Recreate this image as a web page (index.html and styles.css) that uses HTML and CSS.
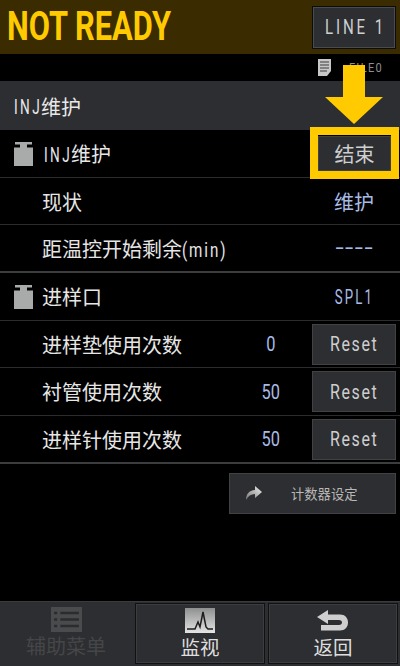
FILE: index.html
```html
<!DOCTYPE html>
<html lang="zh">
<head>
<meta charset="utf-8">
<title>INJ维护</title>
<link rel="stylesheet" href="styles.css">
</head>
<body>
<div class="screen">
  <header class="status">
    <span class="status-text">NOT READY</span>
    <button class="line-btn"><span class="line-text">LINE 1</span></button>
  </header>
  <div class="filebar">
    <svg class="file-icon" width="13" height="17" viewBox="0 0 13 17"><path d="M0 0h13v12l-4 5H0z" fill="#c8c8c8"/><path d="M2 3h9M2 6h9M2 9h9M2 12h7" stroke="#3a3a3a" stroke-width="1.200"/></svg>
    <span class="file-name">FILE0</span>
  </div>
  <div class="title"><span class="inj">INJ</span>维护</div>
  <main class="list">
    <div class="row">
      <svg class="weight" width="19" height="24" viewBox="0 0 19 24"><path d="M1 0h17v2.500h-5v3h6V24H0V5.500h6v-3H1z" fill="#a9abab"/></svg>
      <span class="label tight"><span class="inj row-inj">INJ</span>维护</span>
      <button class="action end-btn">结束</button>
    </div>
    <div class="row">
      <span class="label indent">现状</span>
      <span class="value right-val">维护</span>
    </div>
    <div class="row thick">
      <span class="label indent">距温控开始剩余<span class="min">(min)</span></span>
      <span class="value right-val"><span class="dashes">----</span></span>
    </div>
    <div class="row">
      <svg class="weight" width="19" height="24" viewBox="0 0 19 24"><path d="M1 0h17v2.500h-5v3h6V24H0V5.500h6v-3H1z" fill="#a9abab"/></svg>
      <span class="label tight">进样口</span>
      <span class="value right-val"><span class="spl">SPL1</span></span>
    </div>
    <div class="row">
      <span class="label indent">进样垫使用次数</span>
      <span class="value count"><span class="num">0</span></span>
      <button class="action"><span class="reset">Reset</span></button>
    </div>
    <div class="row">
      <span class="label indent">衬管使用次数</span>
      <span class="value count"><span class="num">50</span></span>
      <button class="action"><span class="reset">Reset</span></button>
    </div>
    <div class="row thick">
      <span class="label indent">进样针使用次数</span>
      <span class="value count"><span class="num">50</span></span>
      <button class="action"><span class="reset">Reset</span></button>
    </div>
    <div class="counter-wrap">
      <button class="counter-btn">
        <svg width="18" height="16" viewBox="0 0 18 16"><defs><linearGradient id="s" x1="0" y1="1" x2="1" y2="0"><stop offset="0" stop-color="#777"/><stop offset="1" stop-color="#eee"/></linearGradient></defs><path d="M1 15C1 9 4 5.500 10 5V1l7 6-7 6V9C6 9 3 11 1 15z" fill="url(#s)"/></svg>
        <span class="counter-text">计数器设定</span>
      </button>
    </div>
  </main>
  <footer class="footer">
    <div class="foot-item disabled">
      <svg width="31" height="25" viewBox="0 0 30 25" preserveAspectRatio="none"><rect width="30" height="25" fill="#4a4b4d"/><path d="M9 6h18M9 12.500h18M9 19h18M3 6h3M3 12.500h3M3 19h3" stroke="#2b2c2e" stroke-width="2.500"/></svg>
      <span>辅助菜单</span>
    </div>
    <button class="foot-item foot-btn">
      <svg width="30" height="25" viewBox="0 0 30 25"><defs><linearGradient id="g" x1="0" y1="0" x2="0" y2="1"><stop offset="0" stop-color="#8e8f8f"/><stop offset="1" stop-color="#e4e4e4"/></linearGradient></defs><rect width="30" height="25" fill="url(#g)"/><path d="M2 21h8l3-7 2 5 3-15 3 15 2 2h5" fill="none" stroke="#1d1d1d" stroke-width="1.500"/></svg>
      <span>监视</span>
    </button>
    <button class="foot-item foot-btn">
      <svg width="34" height="25" viewBox="0 0 34 25"><path d="M1 7 12 0v4.500h12c5 0 8 3.500 8 8s-3 8-8 8H5V15h18c2 0 3-1 3-2.500S25 10 23 10H12v4z" transform="translate(0 2)" fill="#cfcfcf"/></svg>
      <span>返回</span>
    </button>
  </footer>
  <div class="arrow-overlay" aria-hidden="true">
    <svg width="58" height="59" viewBox="0 0 58 59"><path d="M18 0h22v32h18L29 59 0 32h18z" fill="#ffcb00"/></svg>
  </div>
  <div class="highlight" aria-hidden="true"></div>
</div>
</body>
</html>
```
FILE: styles.css
```css
* { box-sizing: border-box; }
html, body { margin: 0; padding: 0; background: #000; }
body {
  font-family: Roboto, "Noto Sans CJK SC", sans-serif;
  color: #e4e4e4;
}
button { font-family: inherit; cursor: pointer; }
.screen {
  position: relative;
  width: 400px;
  height: 666px;
  display: flex;
  flex-direction: column;
  overflow: hidden;
  background: #000;
}
.status {
  height: 54px;
  flex: none;
  background: #3a2c00;
  display: flex;
  align-items: center;
  justify-content: space-between;
  padding: 0 4px 0 7px;
}
.status-text {
  font-family: Roboto, sans-serif;
  font-weight: 700;
  font-size: 40px;
  line-height: 54px;
  color: #ffcb00;
  display: inline-block;
  transform: scaleX(0.77);
  transform-origin: left center;
  white-space: nowrap;
}
.line-btn {
  width: 84px;
  height: 43px;
  background: #2d2e31;
  border: 1px solid #0c0c0c;
  box-shadow: inset 0 0 0 1px #4a4b4d;
  color: #cfcfcf;
  padding: 0;
}
.line-text {
  display: inline-block;
  font-size: 21px;
  letter-spacing: 4px;
  white-space: pre;
  transform: scaleX(0.72);
}
.filebar {
  height: 27px;
  flex: none;
  display: flex;
  align-items: center;
  justify-content: flex-end;
  padding-right: 17px;
  gap: 12px;
  color: #8e8e8e;
}
.file-name {
  display: inline-block;
  font-size: 13px;
  letter-spacing: 1.500px;
  transform: scaleX(0.85);
  transform-origin: right center;
}
.title {
  height: 49px;
  flex: none;
  background: #2d2e31;
  display: flex;
  align-items: center;
  padding: 2px 0 0 14px;
  font-size: 20px;
  color: #e8e8e8;
}
.inj {
  display: inline-block;
  width: 27px;
  font-size: 20px;
  letter-spacing: 3.500px;
  transform: scaleX(0.68);
  transform-origin: left center;
  white-space: nowrap;
}
.row-inj { margin-left: 2px; }
.min {
  display: inline-block;
  width: 45px;
  letter-spacing: 2.500px;
  font-size: 20px;
  transform: scaleX(0.76);
  transform-origin: left center;
  white-space: nowrap;
}
.list { flex: 1; display: flex; flex-direction: column; }
.row {
  height: 47.500px;
  flex: none;
  display: flex;
  align-items: center;
  padding: 1px 4px 0 0;
  border-bottom: 1px solid #2c2c2e;
}
.row.thick { border-bottom: 2px solid #3c3d3f; height: 48px; }
.weight { margin-left: 14px; flex: none; }
.label { font-size: 20px; white-space: nowrap; color: #e6e6e6; }
.label.indent { margin-left: 42px; }
.label.tight { margin-left: 9px; }
.value { color: #a8bbe6; font-size: 20px; }
.right-val { margin-left: auto; width: 84px; text-align: center; }
.count { margin-left: auto; width: 30px; text-align: center; margin-right: 26px; }
.spl {
  display: inline-block;
  font-size: 21px;
  letter-spacing: 3.500px;
  transform: scaleX(0.63);
}
.num {
  display: inline-block;
  font-size: 21px;
  transform: scaleX(0.78);
}
.dashes {
  display: inline-block;
  font-family: "Liberation Sans", sans-serif;
  font-size: 29px;
  line-height: 24px;
  transform: scaleY(0.7);
}
.action {
  width: 84px;
  height: 41px;
  flex: none;
  background: #2d2e31;
  border: 1px solid #414244;
  color: #cfcfcf;
  font-size: 20px;
  padding: 0;
}
.reset {
  display: inline-block;
  font-size: 20px;
  letter-spacing: 2px;
  transform: scaleX(0.8);
}
.end-btn { margin-left: auto; width: 73px; height: 35px; margin-right: 5px; }
.counter-wrap { display: flex; justify-content: flex-end; padding: 9px 4px 0 0; }
.counter-btn {
  width: 167px;
  height: 41px;
  background: #2d2e31;
  border: 1px solid #414244;
  display: flex;
  align-items: center;
  padding: 0 0 0 15px;
  color: #b8b8b8;
}
.counter-text { font-size: 13.300px; margin-left: 28px; }
.footer {
  height: 65px;
  flex: none;
  background: #2d2e31;
  border-top: 1px solid #3a3b3d;
  display: flex;
  padding: 1px 2px 2px 0;
  gap: 3px;
}
.foot-item {
  display: flex;
  flex-direction: column;
  align-items: center;
  justify-content: flex-start;
  padding: 4px 0 0;
  font-size: 19.500px;
  line-height: 31px;
  color: #dedede;
}
.foot-item svg { flex: none; }
.disabled { width: 132px; color: #454648; font-size: 20px; }
.foot-btn {
  width: 130px;
  background: #2d2e31;
  border: 1px solid #111;
  box-shadow: inset 0 0 0 1px #3c3d3f;
}
.arrow-overlay { position: absolute; left: 325px; top: 65px; line-height: 0; }
.highlight {
  position: absolute;
  left: 310px;
  top: 127px;
  width: 89px;
  height: 52px;
  border: 8px solid #ffcb00;
}
```
